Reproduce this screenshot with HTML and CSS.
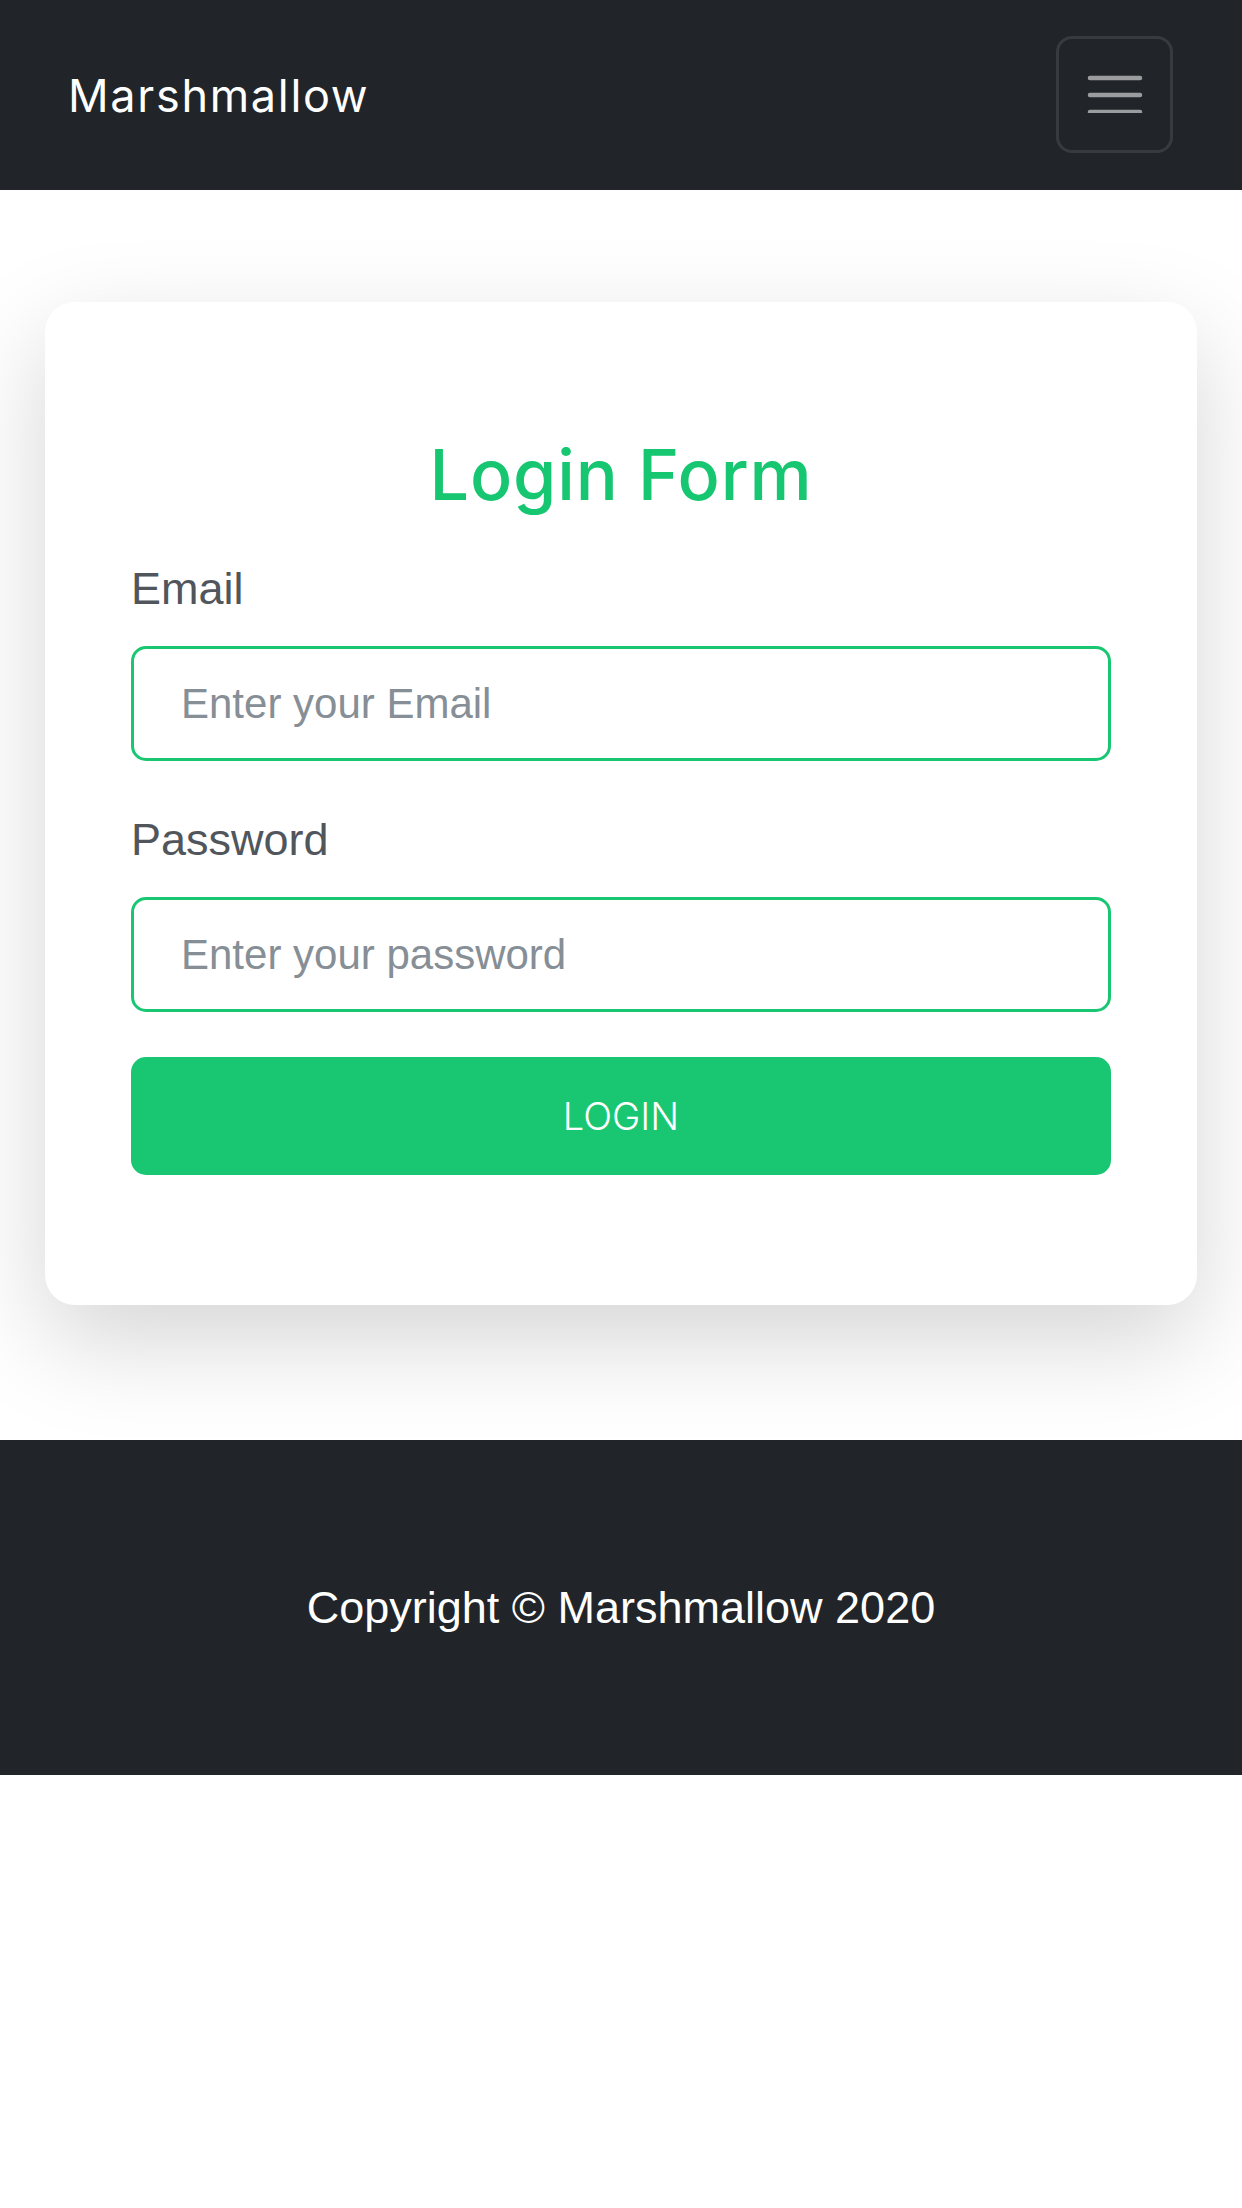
FILE: index.html
```html
<!DOCTYPE html>
<html lang="en">
<head>
<meta charset="utf-8">
<title>Marshmallow - Login</title>
<link rel="stylesheet" href="styles.css">
</head>
<body>
<header class="navbar">
  <a class="brand" href="#">Marshmallow</a>
  <button class="toggler" type="button" aria-label="Toggle navigation">
    <svg class="toggler-icon" width="56" height="40" viewBox="0 0 56 40">
      <path d="M3 5H53M3 22H53M3 39H53" stroke="rgba(255,255,255,0.55)" stroke-width="4.5" stroke-linecap="round" fill="none"/>
    </svg>
  </button>
</header>

<main class="main">
  <section class="card">
    <h2 class="title">Login Form</h2>
    <form class="form">
      <label class="label" for="email">Email</label>
      <input class="input" id="email" type="email" placeholder="Enter your Email">
      <label class="label label-gap" for="password">Password</label>
      <input class="input" id="password" type="password" placeholder="Enter your password">
      <button class="btn" type="button">LOGIN</button>
    </form>
  </section>
</main>

<footer class="footer">
  <p class="copy">Copyright © Marshmallow 2020</p>
</footer>
</body>
</html>
```

FILE: styles.css
```css
* {
  box-sizing: border-box;
}

html, body {
  margin: 0;
  padding: 0;
  background: #ffffff;
}

body {
  font-family: "Liberation Sans", Arial, sans-serif;
}

.navbar {
  height: 190px;
  background: #212529;
  display: flex;
  align-items: center;
  justify-content: space-between;
  padding: 0 69px 0 68px;
}

.brand {
  font-family: Inter, "Noto Sans", sans-serif;
  font-weight: 400;
  font-size: 45px;
  color: #ffffff;
  text-decoration: none;
  letter-spacing: 1.7px;
}

.toggler {
  width: 117px;
  height: 117px;
  margin-top: -1px;
  border: 3px solid rgba(255, 255, 255, 0.1);
  border-radius: 16px;
  background: transparent;
  display: flex;
  align-items: center;
  justify-content: center;
  padding: 0;
}

.toggler-icon {
  display: block;
  margin-top: -4px;
}

.main {
  padding: 112px 45px 135px 45px;
}

.card {
  background: #ffffff;
  border-radius: 30px;
  box-shadow: 0 36px 100px rgba(0, 0, 0, 0.17);
  padding: 113px 86px 130px 86px;
}

.title {
  margin: 0 0 12px 0;
  text-align: center;
  font-family: Inter, "Noto Sans", sans-serif;
  font-weight: 500;
  font-size: 70px;
  line-height: 120px;
  color: #17c671;
  letter-spacing: 0.8px;
}

.form {
  display: flex;
  flex-direction: column;
}

.label {
  font-size: 45px;
  line-height: 67px;
  color: #50565c;
  margin-top: 8px;
  margin-bottom: 24px;
}

.label-gap {
  margin-top: 45px;
}

.input {
  height: 115px;
  width: 100%;
  border: 3px solid #19c773;
  border-radius: 15px;
  padding: 0 47px;
  font-family: "Liberation Sans", Arial, sans-serif;
  font-size: 42px;
  color: #495057;
  background: #ffffff;
  outline: none;
}

.input::placeholder {
  color: #868e96;
}

.btn {
  margin-top: 45px;
  height: 118px;
  width: 100%;
  border: none;
  border-radius: 15px;
  background: #19c773;
  color: #ffffff;
  font-family: Inter, "Noto Sans", sans-serif;
  font-weight: 300;
  font-size: 38px;
  padding: 0;
}

.footer {
  height: 335px;
  background: #212529;
  display: flex;
  align-items: center;
  justify-content: center;
}

.copy {
  margin: 0;
  font-size: 45px;
  color: #ffffff;
}
```
